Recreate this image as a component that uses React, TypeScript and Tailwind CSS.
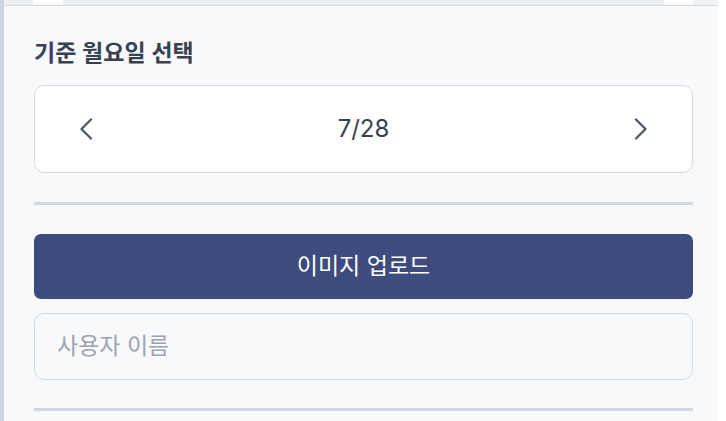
import React from "react";

const font = { fontFamily: '"Inter", "Noto Sans CJK KR", sans-serif' };

function Chevron({ dir }: { dir: "left" | "right" }) {
  return (
    <svg width="14" height="22" viewBox="0 0 14 22" fill="none">
      {dir === "left" ? (
        <polyline points="12,1.5 2.5,11 12,20.5" stroke="#4b5563" strokeWidth="2.2" strokeLinecap="round" strokeLinejoin="round" />
      ) : (
        <polyline points="2,1.5 11.5,11 2,20.5" stroke="#4b5563" strokeWidth="2.2" strokeLinecap="round" strokeLinejoin="round" />
      )}
    </svg>
  );
}

export default function App() {
  return (
    <div className="w-[726px] h-[421px] flex bg-white overflow-hidden" style={font}>
      <div className="w-[4px] h-full bg-[#cfd5de]" />
      <div className="w-[714px] h-full bg-[#f8f9fb] flex flex-col">
        <div className="h-[6px] flex bg-[#eceef1] border-b border-[#d3d7de]">
          <div className="w-[29px]" />
          <div className="w-[30px] bg-white" />
          <div className="flex-1" />
          <div className="w-[29px] bg-white" />
          <div className="w-[25px] bg-[#f1f2f4]" />
        </div>
        <div className="pl-[30px] pr-[25px] flex flex-col">
          <h2 className="mt-[31px] text-[23px] leading-[33px] font-semibold text-[#374151]">기준 월요일 선택</h2>
          <div className="mt-[15px] h-[88px] rounded-[10px] border border-[#d5d9e0] bg-white flex items-center justify-between pl-[44px] pr-[44px]">
            <Chevron dir="left" />
            <span className="text-[24px] text-[#374151]">7/28</span>
            <Chevron dir="right" />
          </div>
          <div className="mt-[29px] h-[3px] bg-[#d3d7de]" />
          <button className="mt-[29px] h-[65px] rounded-[7px] bg-[#3d4b7e] text-white text-[23px] flex items-center justify-center">
            이미지 업로드
          </button>
          <div className="mt-[14px] h-[67px] rounded-[10px] border border-[#d5d9e0] bg-[#f8f9fb] flex items-center pl-[22px]">
            <span className="text-[23px] text-[#9ca3af]">사용자 이름</span>
          </div>
          <div className="mt-[28px] h-[3px] bg-[#d3d7de]" />
        </div>
      </div>
    </div>
  );
}
